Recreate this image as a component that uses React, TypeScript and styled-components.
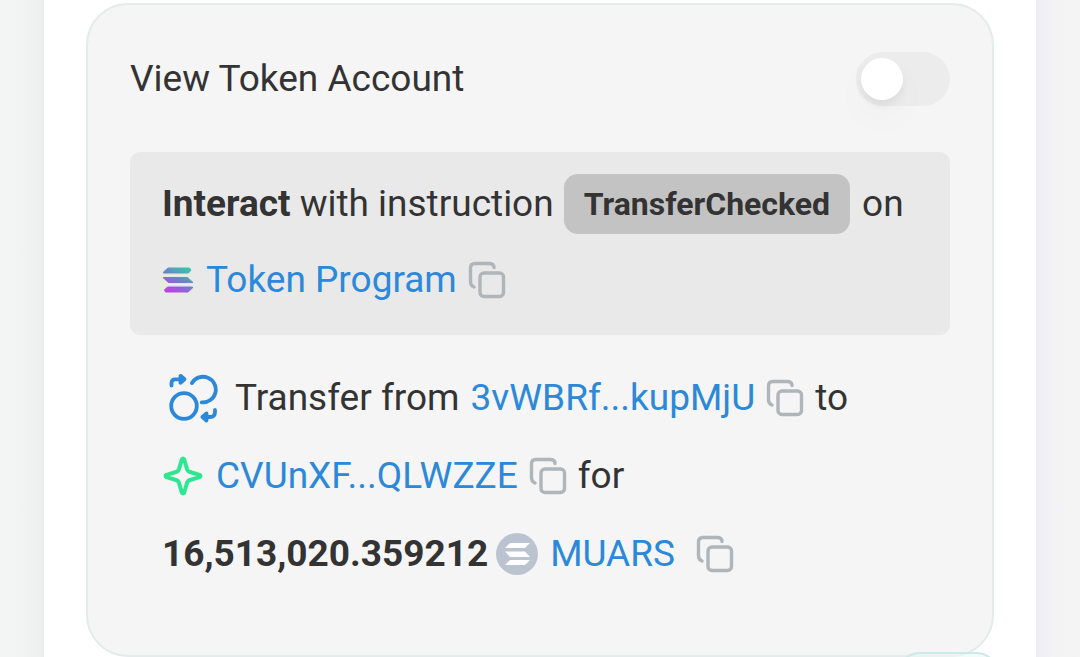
import React, { useState } from "react";
import styled, { createGlobalStyle } from "styled-components";

const GlobalStyle = createGlobalStyle`
  *, *::before, *::after { box-sizing: border-box; }
  body {
    margin: 0;
    background: #f4f4f4;
    color: #333;
    font-family: Roboto, "Liberation Sans", sans-serif;
    font-size: 37px;
    line-height: 44px;
  }
`;

const Page = styled.div`
  display: flex;
  height: 100vh;
  padding: 0 44px;
  overflow: hidden;
  background: linear-gradient(
    to right,
    #f4f4f4 0,
    #f2f3f3 20px,
    #edf0ef 42px,
    #e6ebea 44px,
    #fff 44px,
    #fff calc(100% - 44px),
    #ebebf1 calc(100% - 44px),
    #f0eff4 calc(100% - 40px),
    #f3f3f5 calc(100% - 24px),
    #f4f4f4 100%
  );
`;

const Panel = styled.main`
  flex: 1;
  min-width: 0;
  padding: 3px 42px 0;
`;

const Card = styled.section`
  position: relative;
  padding: 46px 42px 62px;
  border: 2px solid #e5eaea;
  border-radius: 42px;
  background: #f5f5f5;
`;

const CardHeader = styled.label`
  display: flex;
  align-items: center;
  justify-content: space-between;
  height: 56px;
`;

const Switch = styled.input`
  appearance: none;
  display: flex;
  align-items: center;
  width: 94px;
  height: 54px;
  margin: 0;
  padding: 0 5px;
  border-radius: 27px;
  background: #ececec;
  cursor: pointer;

  &::before {
    content: "";
    width: 42px;
    height: 42px;
    border-radius: 50%;
    background: #fff;
    box-shadow: 0 6px 8px rgba(0, 0, 0, 0.05), 0 16px 40px rgba(0, 0, 0, 0.03);
  }

  &:checked {
    justify-content: flex-end;
    background: #2be08e;
  }
`;

const Line = styled.div`
  display: flex;
  align-items: center;
  height: 78px;
  white-space: nowrap;
`;

const Instruction = styled.div`
  margin-top: 45px;
  padding: 14px 32px 17px;
  border-radius: 10px;
  background: #e9e9e9;

  ${Line} {
    height: 76px;
  }
`;

const Details = styled.div`
  padding: 24px 32px 0;
`;

const Text = styled.span<{ $before?: number }>`
  margin-left: ${(p) => p.$before ?? 0}px;
`;

const Strong = styled.strong`
  font-weight: 700;
`;

const Tag = styled.span`
  height: 60px;
  margin: 0 12px 0 10px;
  padding: 0 20px;
  border-radius: 14px;
  background: #c3c3c3;
  font-size: 32px;
  font-weight: 700;
  line-height: 60px;
`;

const Link = styled.a<{ $before?: number }>`
  margin-left: ${(p) => p.$before ?? 12}px;
  color: #2c88d9;
  text-decoration: none;
`;

const CopyButton = styled.button<{ $before?: number }>`
  display: flex;
  margin: 0 0 0 ${(p) => p.$before ?? 11}px;
  padding: 0;
  border: 0;
  background: none;
  color: #b0b5b9;
  cursor: pointer;
`;

const CornerBadge = styled.div`
  position: absolute;
  top: 647px;
  right: -8px;
  width: 104px;
  height: 48px;
  border: 2px solid #cdeae6;
  border-radius: 24px;
  background: rgba(230, 250, 246, 0.6);
`;

const Icon = styled.svg`
  display: block;
  flex: none;
`;

function Copy({ before, label }: { before?: number; label: string }) {
  return (
    <CopyButton type="button" $before={before} aria-label={label}>
      <Icon width="38" height="38" viewBox="0 0 38 38" fill="none" stroke="currentColor" strokeWidth="3.400" strokeLinecap="round">
        <rect x="12" y="12" width="23.500" height="23.500" rx="4" />
        <path d="M6 26 C3.500 25 2.500 24 2.500 21 V7 Q2.500 2.500 7 2.500 H21 Q26 2.500 26 6.500" />
      </Icon>
    </CopyButton>
  );
}

function SolanaIcon() {
  return (
    <Icon width="32" height="26" viewBox="0 0 32 26">
      <defs>
        <linearGradient id="solana" x1="24" y1="0" x2="10" y2="26" gradientUnits="userSpaceOnUse">
          <stop offset="0" stopColor="#35c8a8" />
          <stop offset="0.5" stopColor="#6f7fca" />
          <stop offset="1" stopColor="#c03fe4" />
        </linearGradient>
      </defs>
      <g fill="url(#solana)" stroke="url(#solana)" strokeWidth="1" strokeLinejoin="round">
        <path d="M6 1H27.500L29 3L26.500 6H1.500V5Z" />
        <path d="M1 10.500H25.500L31 15.500H6.500Z" />
        <path d="M5.500 20H30.500V21L26 25H3.500L2.500 23Z" />
      </g>
    </Icon>
  );
}

function TransferIcon() {
  return (
    <Icon width="50" height="50" viewBox="0 0 50 50" fill="none" stroke="#2c88d9" strokeWidth="3.800" strokeLinecap="round" strokeLinejoin="round">
      <circle cx="16" cy="33" r="12.800" />
      <path d="M24 10A12.800 12.800 0 1 1 33.700 29.300" />
      <path d="M3.500 12.500V10Q3.500 6.300 7 6.300H13" />
      <path d="M12.500 2.800L16.500 6.300L12.500 9.800Z" fill="#2c88d9" />
      <path d="M47 37V39Q47 44 42 44H37" />
      <path d="M38.500 40.500L34.500 44L38.500 47.500Z" fill="#2c88d9" />
    </Icon>
  );
}

function SparkIcon() {
  return (
    <Icon width="42" height="42" viewBox="0 0 42 42" fill="none" stroke="#2ee591" strokeWidth="4" strokeLinejoin="round">
      <path d="M19.800 4.500Q21 2.500 22.200 4.500L25 14Q25.800 16.500 28 17L37.500 19.800Q39.500 21 37.500 22.200L28 25Q25.800 25.500 25 28L22.200 37.500Q21 39.500 19.800 37.500L17 28Q16.200 25.500 14 25L4.500 22.200Q2.500 21 4.500 19.800L14 17Q16.200 16.500 17 14Z" />
    </Icon>
  );
}

const CoinIcon = styled(Icon)`
  margin-left: 8px;
`;

function TokenCoin() {
  return (
    <CoinIcon width="42" height="42" viewBox="0 0 42 42">
      <circle cx="21" cy="21" r="21" fill="#bac3cf" />
      <g fill="#fff">
        <path d="M14 10H34L29 15H9Z" />
        <path d="M9 18.500H29L34 24H14Z" />
        <path d="M14 27H34L29 32H9Z" />
      </g>
    </CoinIcon>
  );
}

const TransferMark = styled.span`
  margin-left: 6px;
`;

export default function App() {
  const [checked, setChecked] = useState(false);
  return (
    <>
      <GlobalStyle />
      <Page>
        <Panel>
          <Card>
            <CardHeader>
              View Token Account
              <Switch type="checkbox" role="switch" checked={checked} onChange={(e) => setChecked(e.target.checked)} />
            </CardHeader>
            <Instruction>
              <Line>
                <Strong>Interact</Strong>
                <Text $before={9}>with instruction</Text>
                <Tag>TransferChecked</Tag>
                <Text>on</Text>
              </Line>
              <Line>
                <SolanaIcon />
                <Link href="#token-program">Token Program</Link>
                <Copy label="Copy program address" />
              </Line>
            </Instruction>
            <Details>
              <Line>
                <TransferMark>
                  <TransferIcon />
                </TransferMark>
                <Text $before={17}>Transfer from</Text>
                <Link $before={11} href="#sender">3vWBRf...kupMjU</Link>
                <Copy label="Copy sender address" />
                <Text $before={11}>to</Text>
              </Line>
              <Line>
                <SparkIcon />
                <Link href="#recipient">CVUnXF...QLWZZE</Link>
                <Copy label="Copy recipient address" />
                <Text $before={11}>for</Text>
              </Line>
              <Line>
                <Strong>16,513,020.359212</Strong>
                <TokenCoin />
                <Link href="#muars">MUARS</Link>
                <Copy before={21} label="Copy token address" />
              </Line>
            </Details>
            <CornerBadge />
          </Card>
        </Panel>
      </Page>
    </>
  );
}
